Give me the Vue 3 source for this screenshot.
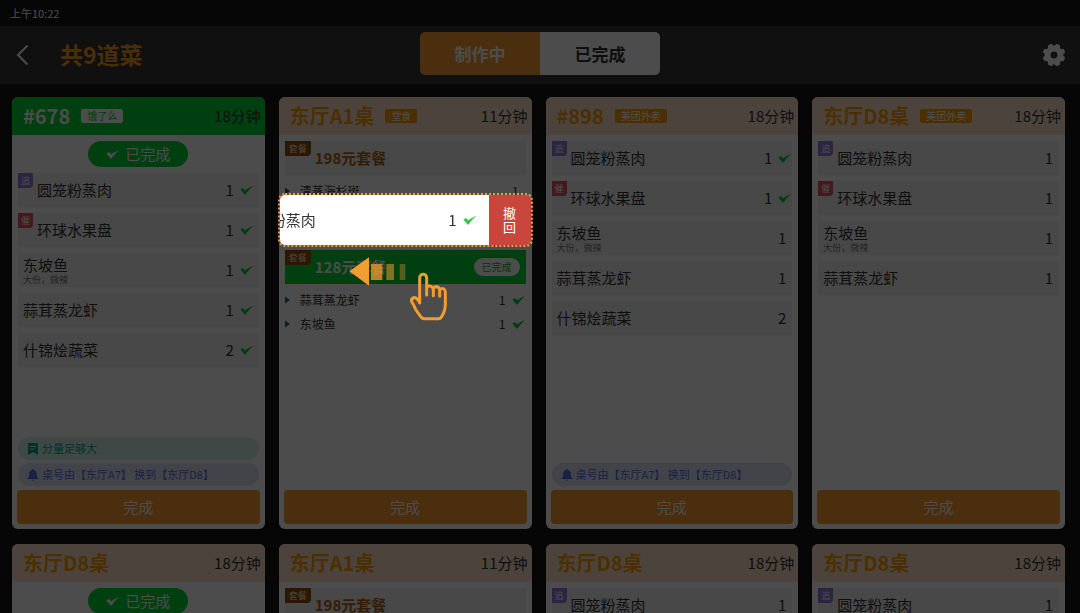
<script setup>
const done = true

const basic = (ticks) => [
  { name: '圆笼粉蒸肉', qty: 1, tag: '追', tone: 'purple', done: ticks > 0 },
  { name: '环球水果盘', qty: 1, tag: '催', tone: 'red', done: ticks > 1 },
  { name: '东坡鱼', note: '大份，微辣', qty: 1, done: ticks > 2 },
  { name: '蒜茸蒸龙虾', qty: 1, done: ticks > 3 },
  { name: '什锦烩蔬菜', qty: 2, done: ticks > 4 },
]

const combos = [
  {
    name: '198元套餐',
    items: [{ name: '清蒸海杉斑', qty: 1 }],
    guide: true,
  },
  {
    name: '128元套餐',
    done,
    items: [
      { name: '蒜茸蒸龙虾', qty: 1, done },
      { name: '东坡鱼', qty: 1, done },
    ],
  },
]

const moved = '桌号由【东厅A7】 换到【东厅D8】'

const cards = [
  { title: '#678', badge: '饿了么', time: '18分钟', ready: true, pill: true, dishes: basic(5), remark: '分量足够大', moved, inset: true, action: '完成' },
  { title: '东厅A1桌', badge: '堂食', time: '11分钟', combos, action: '完成' },
  { title: '#898', badge: '美团外卖', time: '18分钟', dishes: basic(2), moved, action: '完成' },
  { title: '东厅D8桌', badge: '美团外卖', time: '18分钟', dishes: basic(0).slice(0, 4), action: '完成' },
  { title: '东厅D8桌', time: '18分钟', pill: true },
  { title: '东厅A1桌', time: '11分钟', combos: [{ name: '198元套餐', items: [] }] },
  { title: '东厅D8桌', time: '18分钟', dishes: basic(0).slice(0, 1) },
  { title: '东厅D8桌', time: '18分钟', dishes: basic(0).slice(0, 1) },
]

const polar = (r, deg) => {
  const a = (deg * Math.PI) / 180
  return `${(12 + r * Math.cos(a)).toFixed(2)} ${(12 + r * Math.sin(a)).toFixed(2)}`
}
const gear =
  Array.from({ length: 8 }, (_, i) => {
    const a = i * 45 + 22.5
    return `${i ? 'L' : 'M'}${polar(11.2, a - 11)} Q${polar(12, a)} ${polar(11.2, a + 11)} Q${polar(7.4, a + 22.5)} ${polar(11.2, a + 34)}`
  }).join(' ') + ' Z M15.4 12 a3.4 3.4 0 1 0 -6.8 0 a3.4 3.4 0 1 0 6.8 0 Z'

const tick = 'M0.4 4.4 L2.8 2.9 L5.2 5.2 Q9 2.6 13.6 0.8 Q9 4.4 5.8 9.2 Q5 10 4.2 9.2 Z'
</script>

<template>
  <div class="screen">
    <div class="status">上午10:22</div>
    <header class="topbar">
      <div class="lead">
        <button class="icon-btn" aria-label="返回">
          <svg width="13" height="22" viewBox="0 0 13 22"><path d="M11.5 1.5 L2 11 L11.5 20.5" fill="none" stroke="#fff" stroke-width="2" /></svg>
        </button>
        <h1>共9道菜</h1>
      </div>
      <nav class="tabs">
        <button class="tab active">制作中</button>
        <button class="tab">已完成</button>
      </nav>
      <button class="icon-btn settings" aria-label="设置">
        <svg width="24" height="24" viewBox="0 0 24 24"><path :d="gear" fill="#fff" fill-rule="evenodd" /></svg>
      </button>
    </header>

    <main class="board">
      <article v-for="(card, i) in cards" :key="i" class="card">
        <header class="card-head" :class="{ ready: card.ready }">
          <h2>{{ card.title }}</h2>
          <span v-if="card.badge" class="badge">{{ card.badge }}</span>
          <time>{{ card.time }}</time>
        </header>

        <div class="card-body">
          <div v-if="card.pill" class="pill">
            <svg width="14" height="11" viewBox="0 0 14 11"><path :d="tick" fill="#fff" /></svg>
            已完成
          </div>

          <ul v-if="card.dishes" class="dishes" :class="{ inset: card.inset }">
            <li v-for="dish in card.dishes" :key="dish.name" class="dish" :class="{ tagged: dish.tag, ticked: dish.done }">
              <span v-if="dish.tag" class="tag" :class="dish.tone">{{ dish.tag }}</span>
              <div class="label">
                <span class="name">{{ dish.name }}</span>
                <small v-if="dish.note">{{ dish.note }}</small>
              </div>
              <span class="qty">{{ dish.qty }}</span>
              <svg v-if="dish.done" class="tick" width="14" height="11" viewBox="0 0 14 11"><path :d="tick" /></svg>
            </li>
          </ul>

          <section v-for="combo in card.combos" :key="combo.name">
            <div class="combo" :class="{ finished: combo.done }">
              <span class="tag brown">套餐</span>
              <strong>{{ combo.name }}</strong>
              <span v-if="combo.done" class="mini">已完成</span>
            </div>
            <ul class="parts">
              <li v-for="part in combo.items" :key="part.name" class="part" :class="{ ticked: part.done }">
                <svg class="caret" width="5" height="8" viewBox="0 0 5 8"><path d="M0 0.5 L5 4 L0 7.5 Z" /></svg>
                <span class="name">{{ part.name }}</span>
                <span class="qty">{{ part.qty }}</span>
                <svg v-if="part.done" class="tick" width="14" height="11" viewBox="0 0 14 11"><path :d="tick" /></svg>
              </li>
              <li v-if="combo.guide" class="slot">
                <div class="swipe">
                  <span class="swiped">圆笼粉蒸肉</span>
                  <span class="qty">1</span>
                  <svg class="swipe-tick" width="14" height="11" viewBox="0 0 14 11"><path :d="tick" /></svg>
                  <button class="undo">撤回</button>
                </div>
                <svg class="gesture" width="102" height="67" viewBox="231 60 306 201">
                  <g fill="#f29d32">
                    <path d="M238 109 L297 67 V152 Z" />
                    <rect x="303" y="87" width="34" height="48" opacity=".75" />
                    <rect x="349" y="87" width="23" height="48" opacity=".55" />
                    <rect x="389" y="87" width="17" height="48" opacity=".35" />
                  </g>
                  <path
                    d="M449 204 V128 a10.5 10.5 0 0 1 21 0 V180 M470 156 C480 149 490 154 490 166 V182 M490 160 C499 150 509 156 509 168 V184 M509 164 C518 156 526 162 526 172 V208 C526 228 520 238 513 248 Q511 251 506 251 H462 Q457 251 453 246 C441 230 436 226 431 210 L425 200 C422 190 432 185 439 190 Q446 195 449 204"
                    fill="none" stroke="#f29d32" stroke-width="9" stroke-linecap="round" stroke-linejoin="round"
                  />
                </svg>
              </li>
            </ul>
          </section>
        </div>

        <footer v-if="card.action" class="card-foot">
          <p v-if="card.remark" class="notice teal">
            <svg width="12" height="12" viewBox="0 0 12 12"><path d="M1 0 H10 Q11 0 11 1 V12 L6 9 L1 12 Z" fill="#00a889" /><path d="M3 3.5 H9 M3 6 H7" stroke="#d5f5ef" /></svg>
            {{ card.remark }}
          </p>
          <p v-if="card.moved" class="notice blue">
            <svg width="12" height="12" viewBox="0 0 12 12"><path d="M5.2 0.8 a0.8 0.8 0 0 1 1.6 0 C9 1.4 9.8 3 9.8 5 C9.8 7.4 10.4 8.6 11.6 9.4 V10 H0.4 V9.4 C1.6 8.6 2.2 7.4 2.2 5 C2.2 3 3 1.4 5.2 0.8 Z M4.7 10.8 H7.3 Q6 12.8 4.7 10.8 Z" fill="#5470e8" /></svg>
            {{ card.moved }}
          </p>
          <button class="finish">{{ card.action }}</button>
        </footer>
      </article>
    </main>
    <div class="dim"></div>
  </div>
</template>

<style>
body {
  margin: 0;
  background: #161616;
}
</style>

<style scoped>
.screen {
  height: 100vh;
  overflow: hidden;
  display: flex;
  flex-direction: column;
  background: #161616;
  color: #333;
  font-family: "Noto Sans CJK SC", "Noto Sans", sans-serif;
  font-size: 15px;
  line-height: 20px;
}
button {
  font: inherit;
  border: 0;
  padding: 0;
}
h1, h2, p, ul {
  margin: 0;
  padding: 0;
  list-style: none;
}
svg {
  flex: none;
}
.status {
  flex: none;
  padding: 3px 10px;
  color: #fff;
  font-size: 11px;
}
.topbar {
  flex: none;
  display: grid;
  grid-template-columns: 1fr auto 1fr;
  align-items: center;
  height: 58px;
  background: #363636;
}
.lead {
  display: flex;
  align-items: center;
  gap: 31px;
  padding-left: 16px;
}
.icon-btn {
  display: flex;
  background: none;
}
.settings {
  justify-self: end;
  margin-right: 14px;
}
h1 {
  padding-bottom: 2px;
  color: #f99c1c;
  font-size: 23px;
  line-height: 32px;
}
.tabs {
  display: flex;
  width: 240px;
  height: 43px;
  margin-bottom: 3px;
  border-radius: 5px;
  overflow: hidden;
}
.tab {
  flex: 1;
  background: #fff;
  color: #333;
  font-size: 17px;
  font-weight: bold;
}
.tab.active, .finish {
  background: #f79a2f;
  color: #fff;
}
.board {
  display: grid;
  grid-template-columns: repeat(4, 1fr);
  gap: 15px 14px;
  padding: 13px 15px 0 12px;
}
.card {
  display: flex;
  flex-direction: column;
  min-height: 432px;
  border-radius: 6px;
  background: #fff;
}
.card-head {
  display: flex;
  align-items: center;
  gap: 11px;
  height: 38px;
  padding: 0 4px 0 11px;
  border-radius: 6px 6px 0 0;
  background: #ffe4c8;
}
h2 {
  color: #ff9f00;
  font-size: 20px;
  line-height: 28px;
}
time {
  margin-left: auto;
}
.badge {
  padding: 0 6px;
  border-radius: 2px;
  background: #ff9f00;
  color: #fff;
  font-size: 10px;
  line-height: 14px;
}
.ready {
  background: #00d235;
}
.ready h2 {
  color: #fff;
}
.ready .badge {
  background: #fff;
  color: #00d235;
}
.card-body {
  flex: 1;
  padding: 6px 6px 0;
}
.pill {
  display: flex;
  align-items: center;
  justify-content: center;
  gap: 5px;
  width: 100px;
  margin: 0 auto 6px;
  border-radius: 13px;
  background: #00d235;
  color: #fff;
  line-height: 26px;
}
.dishes {
  display: grid;
  gap: 6px;
}
.dish, .combo {
  position: relative;
  display: flex;
  align-items: center;
  height: 34px;
  background: #f2f2f2;
}
.dish {
  padding: 0 6px 0 5px;
}
.dish.tagged {
  padding-left: 19px;
}
.dish.ticked {
  padding-right: 0;
}
.inset .dish.ticked {
  padding-right: 5px;
}
.label {
  display: flex;
  flex-direction: column;
}
.label small {
  color: #777;
  font-size: 9px;
  line-height: 10px;
}
.qty {
  margin-left: auto;
}
.tick {
  margin-left: 6px;
  fill: #00d235;
}
.tag {
  position: absolute;
  left: 0;
  top: 0;
  padding: 0 3px;
  border-radius: 0 0 4px 0;
  color: #fff;
  font-size: 9px;
  line-height: 15px;
}
.purple {
  background: #9479dc;
}
.red {
  background: #e0565b;
}
.brown {
  padding: 0 4px;
  background: #8f4d0c;
  color: #ffe4c8;
}
.combo {
  padding: 0 6px 0 30px;
  color: #b0620f;
}
.combo.finished {
  background: #00d235;
  color: #fff;
}
.mini {
  margin-left: auto;
  padding: 0 8px;
  border-radius: 9px;
  background: #fff;
  color: #00b82e;
  font-size: 10px;
  line-height: 18px;
}
.parts {
  padding-top: 4px;
}
.part {
  display: flex;
  align-items: center;
  height: 24px;
  padding-right: 7px;
  font-size: 12px;
}
.part.ticked {
  padding-right: 0;
}
.caret {
  margin-right: 10px;
  fill: #00708c;
}
.slot {
  position: relative;
  height: 47px;
}
.swipe {
  position: absolute;
  inset: -10px -7px 3px;
  z-index: 20;
  box-sizing: border-box;
  display: flex;
  align-items: center;
  overflow: hidden;
  border: 2px dotted #f29d32;
  border-radius: 7px;
  background: #fff;
  background-clip: padding-box;
}
.swiped {
  margin-left: -39px;
}
.swipe-tick {
  margin: 0 12px 0 6px;
  fill: #38c74e;
}
.undo {
  align-self: stretch;
  width: 42px;
  padding: 0 14px;
  background: #c9463d;
  color: #fff;
  font-size: 13px;
  line-height: 14px;
}
.gesture {
  position: absolute;
  left: 62px;
  top: 52px;
  z-index: 20;
}
.card-foot {
  display: grid;
  gap: 3px;
  padding: 0 5px 5px;
}
.notice {
  display: flex;
  align-items: center;
  gap: 3px;
  margin: 0 1px;
  padding: 0 9px;
  border-radius: 12px;
  font-size: 11px;
  line-height: 23px;
}
.teal {
  background: #d5f1ec;
  color: #00a889;
}
.blue {
  background: #e0e4f7;
  color: #5470e8;
}
.finish {
  height: 34px;
  margin-top: 1px;
  border-radius: 4px;
}
.dim {
  position: fixed;
  inset: 0;
  z-index: 10;
  background: rgba(0, 0, 0, 0.7);
}
</style>
